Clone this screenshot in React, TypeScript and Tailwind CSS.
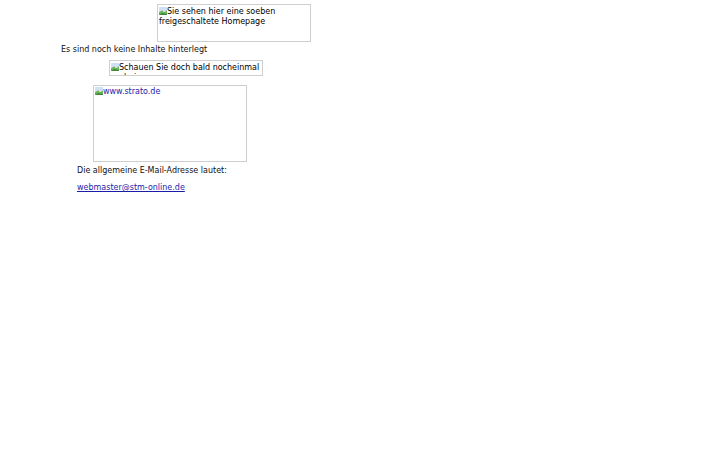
import React from 'react';

// Placeholder for an image that failed to load: grey frame, small icon, alt text
function BrokenImage({ alt, className, link }: { alt: string; className: string; link?: boolean }) {
  return (
    <div className={`border border-[#cfcfcf] overflow-hidden ${className}`}>
      <div className={`leading-[10px] ${link ? 'text-[#1c1caa]' : 'text-black'}`}>
        <svg width="8" height="8" viewBox="0 0 8 8" className="inline-block align-[-1px]">
          <rect x="0" y="0" width="8" height="8" fill="#eef3f8" />
          <rect x="0" y="0" width="8" height="4" fill="#cfe0f2" />
          <path d="M0 8 L0 5 L3 3.5 L5 5 L8 3.5 V8 Z" fill="#6fb35a" />
          <path d="M0 8 L3 6 L8 7 V8 Z" fill="#3f8a3a" />
        </svg>
        {alt}
      </div>
    </div>
  );
}

export default function App() {
  return (
    <div className="w-[720px] h-[450px] bg-white text-[8px] text-[#111]" style={{ fontFamily: '"DejaVu Sans", sans-serif' }}>
      <div className="pt-[4px] pl-[157px]">
        <BrokenImage alt="Sie sehen hier eine soeben freigeschaltete Homepage" className="w-[154px] h-[38px] pt-[1.5px] pl-[1px]" />
      </div>
      <p className="pl-[61px] mt-[2px] leading-[12px]">Es sind noch keine Inhalte hinterlegt</p>
      <div className="pl-[109px] mt-[4px]">
        <BrokenImage alt="Schauen Sie doch bald nocheinmal vorbei" className="w-[154px] h-[16px] pt-[1.5px] pl-[1px]" />
      </div>
      <div className="pl-[93px] mt-[9px]">
        <BrokenImage alt="www.strato.de" link className="w-[154px] h-[77px] pt-[1px] pl-[1px]" />
      </div>
      <p className="pl-[77px] mt-[3px] leading-[12px]">Die allgemeine E-Mail-Adresse lautet:</p>
      <p className="pl-[77px] mt-[5px] leading-[12px]">
        <a href="#" className="text-[#1c1caa] underline">webmaster@stm-online.de</a>
      </p>
    </div>
  );
}
